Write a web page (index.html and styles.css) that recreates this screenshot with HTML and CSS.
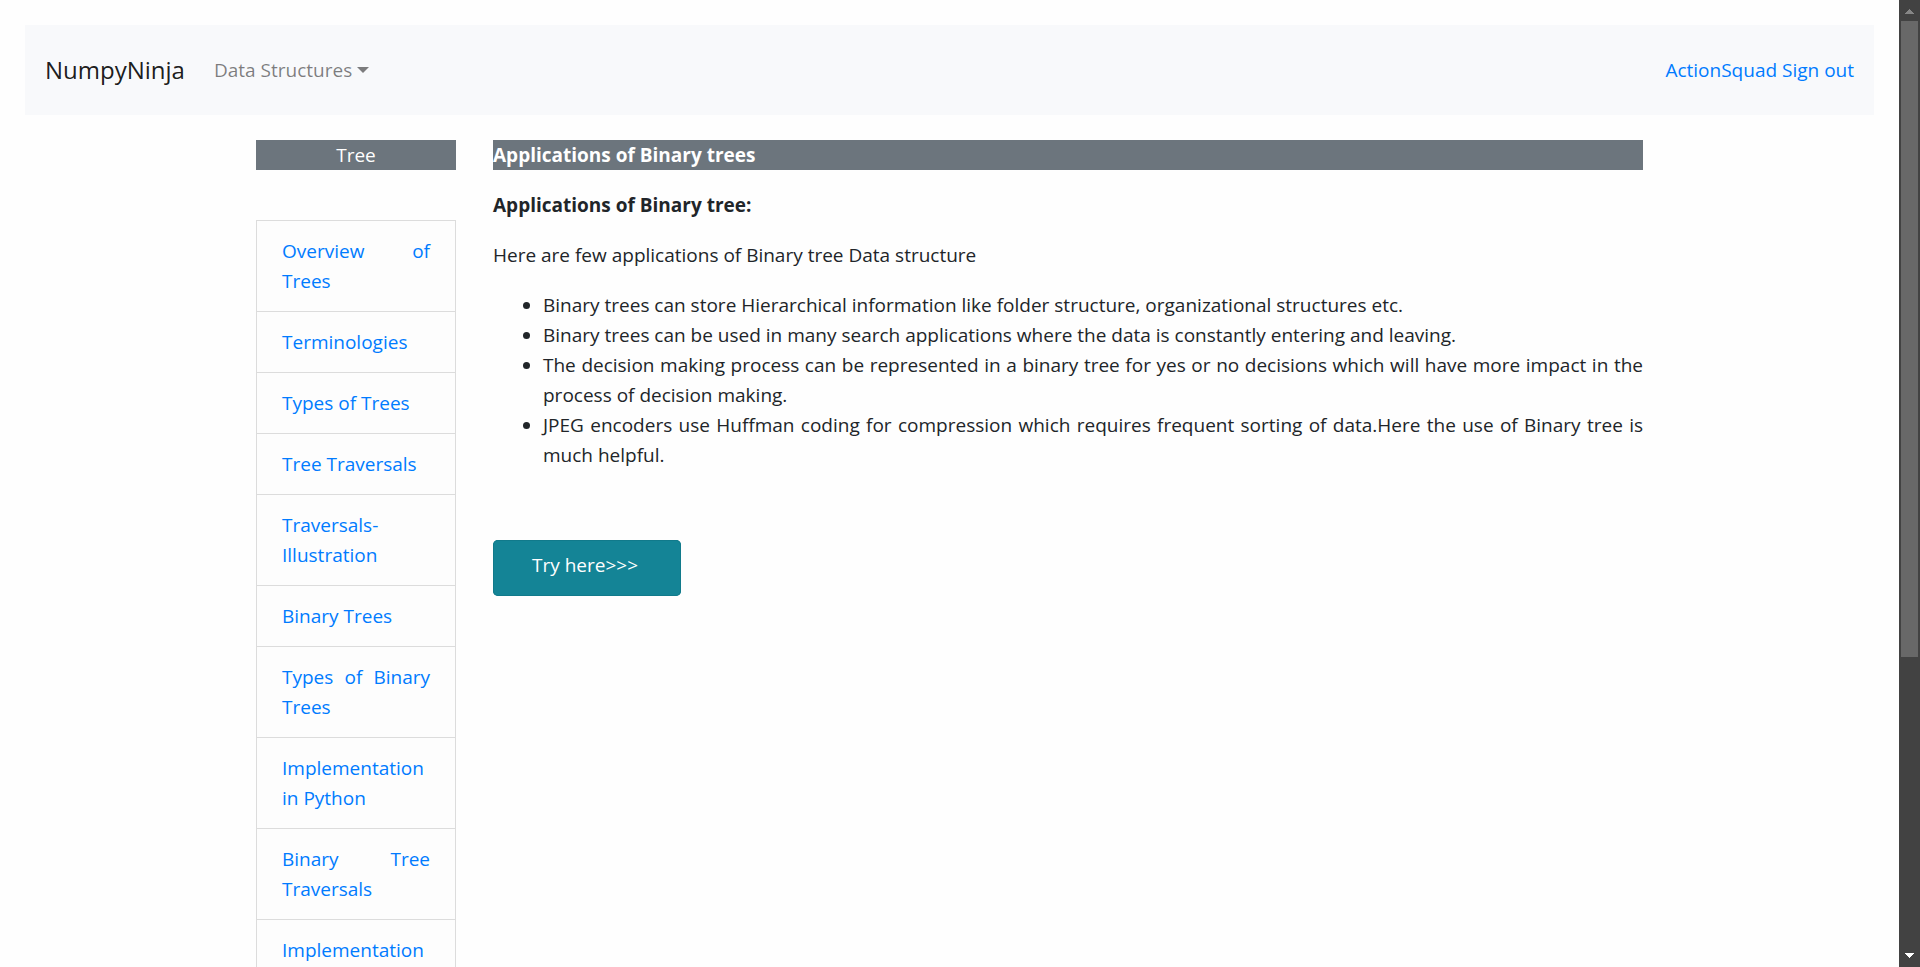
FILE: index.html
```html
<!DOCTYPE html>
<html lang="en">
<head>
<meta charset="utf-8">
<title>NumpyNinja</title>
<link rel="stylesheet" href="styles.css">
</head>
<body>
<div class="viewport">
  <div class="page">
    <nav class="navbar">
      <a class="brand" href="#">NumpyNinja</a>
      <button class="dropdown" type="button">Data Structures<span class="caret"></span></button>
      <div class="account"><a href="#">ActionSquad</a> <a href="#">Sign out</a></div>
    </nav>
    <div class="container">
      <aside class="sidebar">
        <div class="bar bar-center">Tree</div>
        <nav class="topics">
          <a href="#">Overview of Trees</a>
          <a href="#">Terminologies</a>
          <a href="#">Types of Trees</a>
          <a href="#">Tree Traversals</a>
          <a href="#">Traversals-Illustration</a>
          <a href="#">Binary Trees</a>
          <a href="#">Types of Binary Trees</a>
          <a href="#">Implementation in Python</a>
          <a href="#">Binary Tree Traversals</a>
          <a href="#">Implementation</a>
        </nav>
      </aside>
      <main class="content">
        <h1 class="bar bar-title">Applications of Binary trees</h1>
        <h2 class="subtitle">Applications of Binary tree:</h2>
        <p>Here are few applications of Binary tree Data structure</p>
        <ul>
          <li>Binary trees can store Hierarchical information like folder structure, organizational structures etc.</li>
          <li>Binary trees can be used in many search applications where the data is constantly entering and leaving.</li>
          <li>The decision making process can be represented in a binary tree for yes or no decisions which will have more impact in the process of decision making.</li>
          <li>JPEG encoders use Huffman coding for compression which requires frequent sorting of data.Here the use of Binary tree is much helpful.</li>
        </ul>
        <button class="try" type="button">Try here&gt;&gt;&gt;</button>
      </main>
    </div>
  </div>
  <div class="scrollbar" aria-hidden="true">
    <svg class="arrow" viewBox="0 0 21 21" shape-rendering="crispEdges"><path d="M6 14h9L10.500 9z" fill="#868686"/></svg>
    <div class="track"><div class="thumb"></div></div>
    <svg class="arrow" viewBox="0 0 21 21" shape-rendering="crispEdges"><path d="M6 7h9L10.500 12z" fill="#fff"/></svg>
  </div>
</div>
</body>
</html>
```
FILE: styles.css
```css
* { box-sizing: border-box; }

body {
  margin: 0;
  background: #fefefe;
  color: #212529;
  font-family: "Segoe UI", "Open Sans", sans-serif;
  font-size: 19px;
  line-height: 30px;
}

a { color: #007bff; text-decoration: none; }

button {
  font: inherit;
  border: 0;
  cursor: pointer;
}

.viewport {
  display: flex;
  height: 100vh;
  overflow: hidden;
}

.page {
  flex: 1;
  min-width: 0;
  padding: 25px;
  overflow: hidden;
}

.navbar {
  display: flex;
  align-items: center;
  padding: 20px;
  min-height: 90px;
  background: #f8f9fb;
}

.brand {
  margin-right: 29px;
  color: rgba(0, 0, 0, 0.9);
  font-size: 24px;
}

.dropdown {
  display: flex;
  align-items: center;
  gap: 5px;
  padding: 0;
  background: none;
  color: rgba(0, 0, 0, 0.5);
}

.caret {
  border: 6px solid transparent;
  border-top-color: currentColor;
  border-bottom: 0;
}

.account { margin-left: auto; }

.container {
  display: grid;
  grid-template-columns: 200px minmax(0, 1fr);
  column-gap: 37px;
  max-width: 1387px;
  margin: 25px auto 0;
}

.bar {
  margin: 0;
  background: #6c757d;
  color: #fff;
  font-size: 19px;
}

.bar-center { text-align: center; }

.topics {
  margin-top: 50px;
  border: 1px solid #dcdcdc;
  background: #fdfdfd;
  text-align: justify;
}

.topics a {
  display: block;
  padding: 15px 25px;
}

.topics a + a { border-top: 1px solid #dcdcdc; }

.content { text-align: justify; }

.bar-title, .subtitle { font-weight: 700; }

.subtitle {
  margin: 20px 0;
  font-size: 19px;
}

.content p { margin: 0 0 20px; }

.content ul {
  margin: 0;
  padding-left: 50px;
}

.try {
  display: block;
  min-width: 188px;
  margin-top: 70px;
  padding: 10px 39px 16px;
  border-radius: 5px;
  background: #148496;
  box-shadow: inset 0 0 0 1px #117a8b;
  color: #fff;
  text-align: left;
}

.scrollbar {
  display: flex;
  flex-direction: column;
  width: 21px;
  background: #424242;
}

.arrow {
  display: block;
  width: 21px;
  height: 21px;
}

.track {
  flex: 1;
  padding: 0 2px;
}

.thumb {
  height: 68.8%;
  background: #686868;
}
```
